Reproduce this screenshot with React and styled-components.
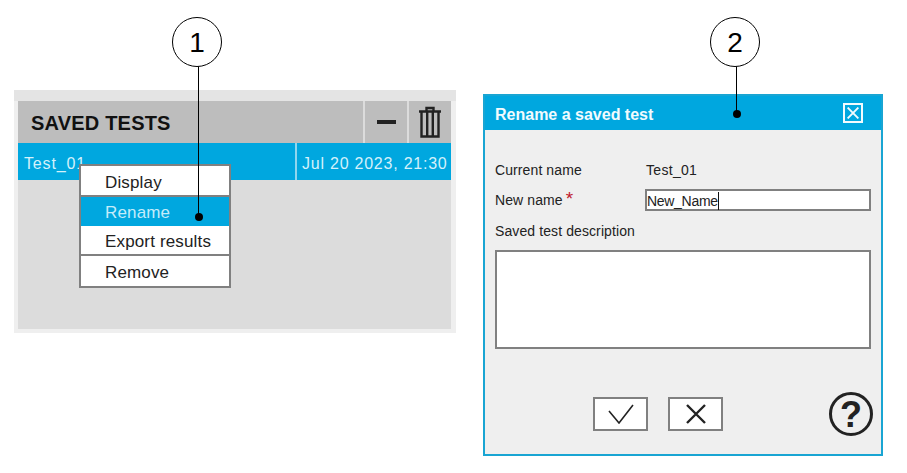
import React from 'react';
import styled, { createGlobalStyle } from 'styled-components';

const Global = createGlobalStyle`
html, body { margin: 0; padding: 0; background: #fff; }
body { font-family: "Liberation Sans", Arial, sans-serif; color: #222; }
`

const Page = styled.div`
position: relative;
width: 907px;
height: 473px;
overflow: hidden;
display: flex;
align-items: flex-start;
padding-left: 14px;
box-sizing: border-box;
`

const Panel = styled.section`
width: 442px;
height: 243px;
margin-top: 90px;
box-sizing: border-box;
padding: 11px 5px 4px 4px;
background: linear-gradient(#e4e4e4 0 11px, #efefef 11px);
`

const PanelInner = styled.div`
height: 100%;
background: #dcdcdc;
position: relative;
`

const PanelHeader = styled.header`
height: 42px;
display: flex;
background: #bdbdbd;
`

const PanelTitle = styled.h2`
flex: 1;
margin: 0;
padding: 11px 0 0 13px;
font-size: 20px;
line-height: 23px;
font-weight: 700;
letter-spacing: 0.2px;
color: #111;
`

const HeaderButton = styled.div`
display: flex;
align-items: center;
justify-content: center;
border-left: 2px solid #dcdcdc;
box-sizing: border-box;
width: ${p => p.$w}px;
`

const TestRow = styled.div`
height: 37px;
display: flex;
background: #00a7df;
color: #d4f1fb;
font-size: 16px;
line-height: 41px;
`

const TestName = styled.div`
width: 277px;
padding-left: 6px;
letter-spacing: 0.85px;
box-sizing: border-box;
`

const TestDate = styled.div`
flex: 1;
padding-left: 5px;
border-left: 2px solid #8fd6ee;
letter-spacing: 0.77px;
white-space: nowrap;
overflow: hidden;
`

const Menu = styled.ul`
position: absolute;
left: 61px;
top: 63px;
width: 152px;
margin: 0;
padding: 0;
list-style: none;
background: #fff;
border: 2px solid #808080;
box-sizing: border-box;
`

const MenuItem = styled.li`
box-sizing: border-box;
height: ${p => p.$h}px;
padding-left: 24px;
font-size: 17px;
line-height: ${p => p.$lh}px;
letter-spacing: 0.15px;
color: ${p => (p.$active ? '#c4ecfa' : '#222')};
background: ${p => (p.$active ? '#00a7df' : '#fff')};
border-bottom: ${p => (p.$line ? '2px solid #808080' : 'none')};
`

const Dialog = styled.section`
width: 400px;
height: 362px;
margin: 94px 0 0 27px;
box-sizing: border-box;
border: 2px solid #19a5d3;
background: #efefef;
display: flex;
flex-direction: column;
`

const DialogTitle = styled.header`
height: 34px;
flex: none;
display: flex;
align-items: center;
justify-content: space-between;
box-sizing: border-box;
padding: 0 18px 0 10px;
background: #00a7df;
color: #f2fbfe;
font-size: 16px;
font-weight: 700;
`

const DialogTitleText = styled.span`
padding-top: 3px;
`

const CloseBox = styled.div`
width: 20px;
height: 20px;
box-sizing: border-box;
border: 2px solid #f2fbfe;
display: flex;
align-items: center;
justify-content: center;
`

const DialogBody = styled.div`
flex: 1;
padding: 30px 10px 0;
position: relative;
`

const FieldRow = styled.div`
display: flex;
align-items: center;
height: ${p => p.$h}px;
font-size: 14px;
letter-spacing: 0.1px;
color: #222;
`

const FieldLabel = styled.span`
width: 150px;
`

const FieldValue = styled.span`
padding-left: 1px;
letter-spacing: 0.3px;
`

const Star = styled.span`
color: #c0182c;
font-size: 19px;
line-height: 14px;
margin-left: 3px;
`

const NameInput = styled.div`
width: 226px;
height: 22px;
box-sizing: border-box;
border: 2px solid #808080;
background: #fff;
font-size: 14px;
line-height: 20px;
letter-spacing: -0.3px;
color: #222;
`

const Caret = styled.span`
display: inline-block;
width: 1px;
height: 18px;
background: #111;
vertical-align: top;
margin-top: 1px;
`

const DescriptionBox = styled.div`
width: 376px;
height: 99px;
margin-top: 8px;
box-sizing: border-box;
border: 2px solid #808080;
background: #fff;
`

const ButtonRow = styled.div`
display: flex;
gap: 20px;
margin: 48px 0 0 98px;
`

const DialogButton = styled.div`
width: 55px;
height: 34px;
box-sizing: border-box;
border: 2px solid #808080;
background: #fff;
display: flex;
align-items: center;
justify-content: center;
`

const HelpButton = styled.div`
position: absolute;
right: 8px;
bottom: 18px;
width: 44px;
height: 44px;
box-sizing: border-box;
border: 3px solid #222;
border-radius: 50%;
text-align: center;
font-size: 36px;
font-weight: 700;
line-height: 39px;
color: #222;
`

const Callout = styled.div`
position: absolute;
left: ${p => p.$x}px;
top: 17px;
width: 50px;
height: 50px;
box-sizing: border-box;
border: 1px solid #000;
border-radius: 50%;
background: #fff;
text-align: center;
font-size: 28px;
line-height: 49px;
color: #000;
`

const Leader = styled.div`
position: absolute;
left: ${p => p.$x}px;
top: 66px;
width: 1px;
height: ${p => p.$h}px;
background: #000;
&::after {
  content: "";
  position: absolute;
  left: -3px;
  bottom: -4px;
  width: 8px;
  height: 8px;
  border-radius: 50%;
  background: #000;
}
`

const Minus = () => (
  <svg width="20" height="6" viewBox="0 0 20 6" style={{ marginLeft: 2 }}><rect x="0" y="1" width="19" height="4" fill="#222" /></svg>
)

const Trash = () => (
  <svg width="24" height="32" viewBox="0 0 24 32" fill="none" stroke="#222" strokeWidth="2.4">
    <path d="M1 5.5h22M8.5 5V2h7v3" />
    <path d="M3.5 6v24.5h17V6M9.2 6v24M14.8 6v24" />
  </svg>
)

const Cross = ({ size, color, width }) => (
  <svg width={size} height={size} viewBox="0 0 20 20" stroke={color} strokeWidth={width} fill="none">
    <path d="M1 1l18 18M19 1L1 19" />
  </svg>
)

const App = () => {
  return (
    <Page>
      <Global />
      <Panel>
        <PanelInner>
          <PanelHeader>
            <PanelTitle>SAVED TESTS</PanelTitle>
            <HeaderButton $w={44}><Minus /></HeaderButton>
            <HeaderButton $w={44}><Trash /></HeaderButton>
          </PanelHeader>
          <TestRow>
            <TestName>Test_01</TestName>
            <TestDate>Jul 20 2023, 21:30</TestDate>
          </TestRow>
          <Menu>
            <MenuItem $h={31} $lh={33} $line>Display</MenuItem>
            <MenuItem $h={29} $lh={32} $active>Rename</MenuItem>
            <MenuItem $h={30} $lh={32} $line>Export results</MenuItem>
            <MenuItem $h={30} $lh={34}>Remove</MenuItem>
          </Menu>
        </PanelInner>
      </Panel>

      <Dialog>
        <DialogTitle>
          <DialogTitleText>Rename a saved test</DialogTitleText>
          <CloseBox><Cross size={12} color="#f2fbfe" width={3.2} /></CloseBox>
        </DialogTitle>
        <DialogBody>
          <FieldRow $h={20}>
            <FieldLabel>Current name</FieldLabel>
            <FieldValue>Test_01</FieldValue>
          </FieldRow>
          <FieldRow $h={40}>
            <FieldLabel>New name<Star>*</Star></FieldLabel>
            <NameInput>New_Name<Caret /></NameInput>
          </FieldRow>
          <FieldRow $h={22}>Saved test description</FieldRow>
          <DescriptionBox />
          <ButtonRow>
            <DialogButton>
              <svg width="26" height="20" viewBox="0 0 26 20" fill="none" stroke="#222" strokeWidth="1.6"><path d="M1 7l10 12L25 1" /></svg>
            </DialogButton>
            <DialogButton><Cross size={20} color="#222" width={2.4} /></DialogButton>
          </ButtonRow>
          <HelpButton>?</HelpButton>
        </DialogBody>
      </Dialog>

      <Leader $x={198} $h={151} />
      <Callout $x={172}>1</Callout>
      <Leader $x={736} $h={48} />
      <Callout $x={710}>2</Callout>
    </Page>
  )
}

export default App
